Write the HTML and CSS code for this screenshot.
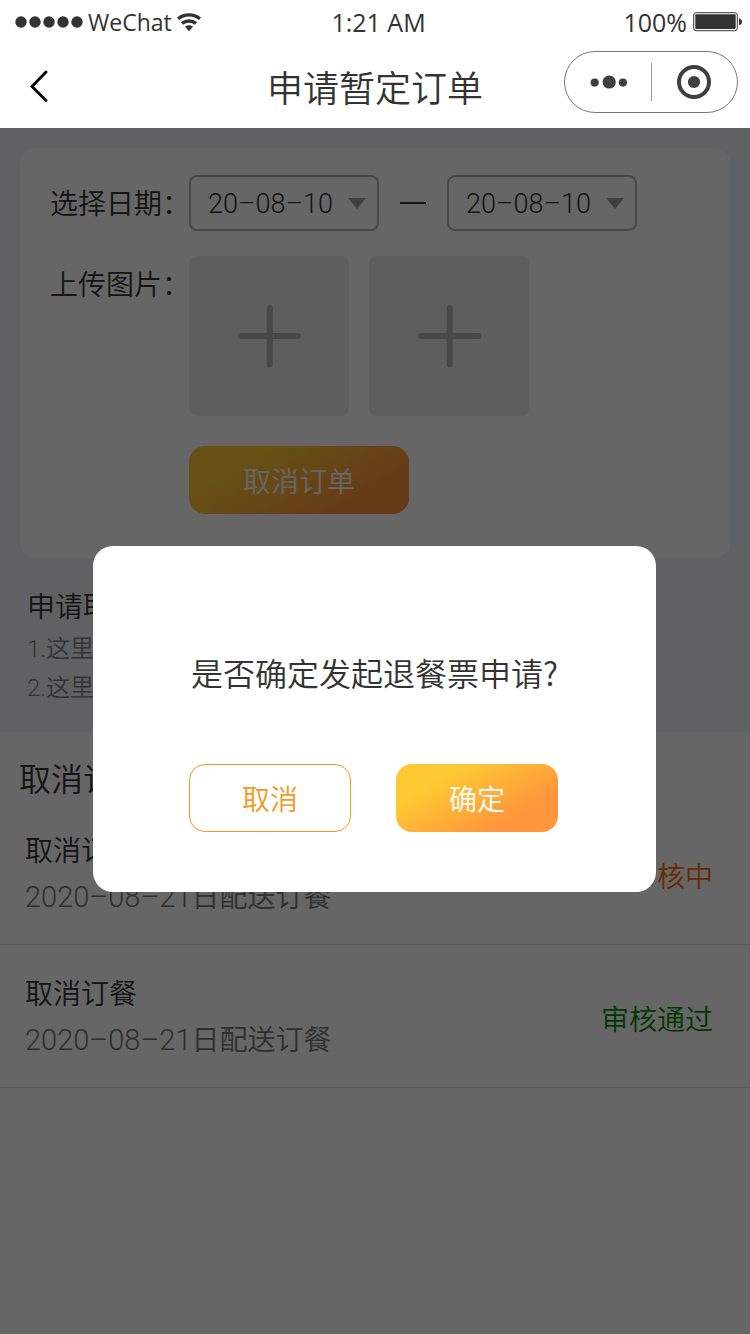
FILE: index.html
```html
<!DOCTYPE html>
<html lang="zh-CN">
<head>
<meta charset="utf-8">
<meta name="viewport" content="width=device-width">
<title>申请暂定订单</title>
<link rel="stylesheet" href="styles.css">
</head>
<body>
<div class="app">
  <header class="top">
    <div class="status">
      <div class="carrier">
        <svg class="signal" width="68" height="12" viewBox="0 0 68 12" aria-hidden="true"><circle cx="6" cy="6" r="5.7"/><circle cx="20" cy="6" r="5.7"/><circle cx="34" cy="6" r="5.7"/><circle cx="48" cy="6" r="5.7"/><circle cx="62" cy="6" r="5.7"/></svg>
        <span class="carrier-name">WeChat</span>
        <svg class="wifi" width="24" height="18" viewBox="0 0 24 18" aria-hidden="true"><path class="arc" d="M1 5.8A17.5 17.5 0 0 1 23 5.8M5 10.4A11.2 11.2 0 0 1 19 10.4"/><path d="M8 13.6Q12 11 16 13.6L12.8 17.4Q12 18.2 11.2 17.4Z"/></svg>
      </div>
      <span class="clock">1:21 AM</span>
      <div class="power">
        <span>100%</span>
        <svg width="49" height="20" viewBox="0 0 49 20" aria-hidden="true"><rect class="shell" x=".7" y=".7" width="43.6" height="18" rx="2.5"/><rect x="2.3" y="2.3" width="40.4" height="14.8" rx="1"/><path d="M46 6.2Q49 7.2 49 9.7T46 13.2Z"/></svg>
      </div>
    </div>
    <nav class="nav">
      <button class="back" type="button" aria-label="返回"><svg width="20" height="32" viewBox="0 0 20 32" aria-hidden="true"><path d="M17 2 3 16.4 17 30.5"/></svg></button>
      <h1 class="title">申请暂定订单</h1>
      <div class="capsule">
        <button class="capsule-btn" type="button" aria-label="更多"><svg width="38" height="14" viewBox="0 0 38 14" aria-hidden="true"><circle cx="5.7" cy="7.6" r="4.1"/><circle cx="20.2" cy="7" r="6.6"/><circle cx="33.9" cy="7.6" r="4.1"/></svg></button>
        <button class="capsule-btn" type="button" aria-label="关闭"><svg width="34" height="34" viewBox="0 0 34 34" aria-hidden="true"><circle class="ring" cx="17" cy="17" r="15"/><circle cx="17" cy="17" r="6.1"/></svg></button>
      </div>
    </nav>
  </header>

  <main class="page">
    <div class="apply">
      <form class="card">
        <div class="row">
          <label class="label" for="from">选择日期：</label>
          <div class="dates">
            <span class="pick"><select id="from"><option>20–08–10</option></select><svg class="caret" width="18" height="11" viewBox="0 0 18 11" aria-hidden="true"><path d="M0 0H18L9 11Z"/></svg></span>
            <span class="dash"></span>
            <span class="pick"><select aria-label="结束日期"><option>20–08–10</option></select><svg class="caret" width="18" height="11" viewBox="0 0 18 11" aria-hidden="true"><path d="M0 0H18L9 11Z"/></svg></span>
          </div>
        </div>
        <div class="row">
          <span class="label">上传图片：</span>
          <div class="uploads">
            <button class="upload" type="button" aria-label="添加图片"><svg width="64" height="64" viewBox="0 0 64 64" aria-hidden="true"><path d="M32.7 4V60.5M4.2 32H61"/></svg></button>
            <button class="upload" type="button" aria-label="添加图片"><svg width="64" height="64" viewBox="0 0 64 64" aria-hidden="true"><path d="M32.7 4V60.5M4.2 32H61"/></svg></button>
          </div>
        </div>
        <button class="btn btn-fill submit" type="button">取消订单</button>
      </form>
      <section class="notes">
        <h2 class="notes-title">申请取消</h2>
        <p class="note">1.这里是说明</p>
        <p class="note">2.这里是说明</p>
      </section>
    </div>

    <section class="records">
      <h2 class="records-title">取消订单</h2>
      <ul class="list">
        <li class="item">
          <div><h3 class="item-title">取消订餐</h3><p class="item-text"><time>2020–08–21</time>日配送订餐</p></div>
          <span class="state state-wait">审核中</span>
        </li>
        <li class="item">
          <div><h3 class="item-title">取消订餐</h3><p class="item-text"><time>2020–08–21</time>日配送订餐</p></div>
          <span class="state state-pass">审核通过</span>
        </li>
      </ul>
    </section>

    <div class="mask">
      <div class="dialog" role="dialog" aria-modal="true" aria-labelledby="ask">
        <p class="ask" id="ask">是否确定发起退餐票申请?</p>
        <div class="actions">
          <button class="btn btn-line" type="button">取消</button>
          <button class="btn btn-fill" type="button">确定</button>
        </div>
      </div>
    </div>
  </main>
</div>
</body>
</html>
```
FILE: styles.css
```css
* { box-sizing: border-box; }
body, h1, h2, h3, p, ul { margin: 0; padding: 0; }
h1, h2, h3 { font-weight: inherit; }
body {
  font-family: Roboto, "Noto Sans CJK SC", sans-serif;
  font-weight: 350;
  font-size: 28px;
  color: #333;
  background: #fff;
}
button, select { font: inherit; color: inherit; border: 0; background: none; padding: 0; }
svg { display: block; }
.app { display: flex; flex-direction: column; min-height: 100vh; }

.top { background: #fff; }
.status {
  display: grid;
  grid-template-columns: 1fr auto 1fr;
  align-items: center;
  height: 44px;
  padding: 0 8px 0 15px;
  font: 400 25px/44px "Open Sans", "Noto Sans", sans-serif;
  fill: #333;
}
.carrier, .power { display: flex; align-items: center; }
.carrier { gap: 5px; }
.carrier-name { font-size: 23px; }
.power { justify-content: flex-end; gap: 6px; }
.wifi .arc { fill: none; stroke: #333; stroke-width: 3.4; }
.shell { fill: none; stroke: #333; stroke-width: 1; }

.nav {
  display: grid;
  grid-template-columns: 1fr auto 1fr;
  align-items: center;
  height: 84px;
  padding: 0 12px;
}
.back { justify-self: start; margin-left: 17px; }
.back path { fill: none; stroke: #000; stroke-width: 2.8; stroke-linecap: round; }
.title { padding-top: 8px; font-size: 36px; line-height: 52px; }
.capsule {
  justify-self: end;
  display: flex;
  width: 174px;
  height: 62px;
  margin-bottom: 8px;
  border: 1px solid #777;
  border-radius: 31px;
  fill: #3f3f3f;
}
.capsule-btn { flex: 1; display: grid; place-items: center; position: relative; }
.capsule-btn + .capsule-btn::before {
  content: "";
  position: absolute;
  left: 0;
  top: 11px;
  bottom: 11px;
  border-left: 1px solid #999;
}
.ring { fill: none; stroke: #3f3f3f; stroke-width: 4; }

.page { position: relative; flex: 1; }
.apply { padding: 20px 20px 24px; background: #f0f3f7; }
.card {
  display: flex;
  flex-direction: column;
  gap: 25px;
  padding: 27px 30px 44px;
  border-radius: 16px;
  background: #fff;
}
.row { display: flex; }
.row:first-child { height: 56px; }
.label { width: 139px; line-height: 60px; white-space: nowrap; }
.dates { display: flex; align-items: center; gap: 21px; }
.pick { display: grid; align-items: center; width: 190px; }
.pick > * { grid-area: 1 / 1; }
.pick select {
  appearance: none;
  height: 56px;
  padding: 2px 17px 0;
  border: 2px solid #b2b2b2;
  border-radius: 8px;
  font-size: 27px;
}
.caret { justify-self: end; margin-right: 13px; fill: #a0a0a0; pointer-events: none; }
.dash { width: 26px; border-top: 2px solid #333; }
.uploads { display: flex; gap: 20px; }
.upload {
  display: grid;
  place-items: center;
  width: 160px;
  height: 160px;
  border-radius: 8px;
  background: #eaeaea;
}
.upload path { stroke: #b4b4b4; stroke-width: 6; stroke-linecap: round; }

.btn { height: 68px; border-radius: 16px; }
.btn-fill { color: #fff; background: linear-gradient(150deg, #ffc933 25%, #ff963c 75%); }
.btn-line { color: #f5981d; border: 1px solid #f5981d; }
.submit { width: 220px; margin: 5px 0 0 139px; }

.notes { padding: 28px 7px 0; }
.notes-title { font-size: 28px; line-height: 44px; }
.note { font-size: 24px; line-height: 39px; color: #808080; }

.records { background: #fff; }
.records-title { padding: 26px 19px 0; font-size: 32px; line-height: 44px; }
.list { list-style: none; }
.item {
  display: flex;
  justify-content: space-between;
  align-items: center;
  padding: 27px 37px 23px 25px;
  border-bottom: 1px solid #d8d8d8;
}
.item-title { font-size: 28px; line-height: 46px; }
.item-text { line-height: 46px; color: #777; }
.item-text time { font-size: 29px; line-height: 1; }
.state-wait { color: #ff6c00; }
.state-pass { color: #008c00; }

.mask {
  position: absolute;
  inset: 0;
  padding-top: 418px;
  background: rgba(0, 0, 0, .6);
}
.dialog {
  margin: 0 94px 0 93px;
  padding: 102px 0 60px;
  border-radius: 20px;
  background: #fff;
}
.ask {
  font-family: "Noto Sans CJK SC", sans-serif;
  font-size: 32px;
  line-height: 48px;
  text-align: center;
}
.actions { display: flex; gap: 45px; margin-top: 68px; padding: 0 96px; }
.actions .btn { width: 162px; }
```
